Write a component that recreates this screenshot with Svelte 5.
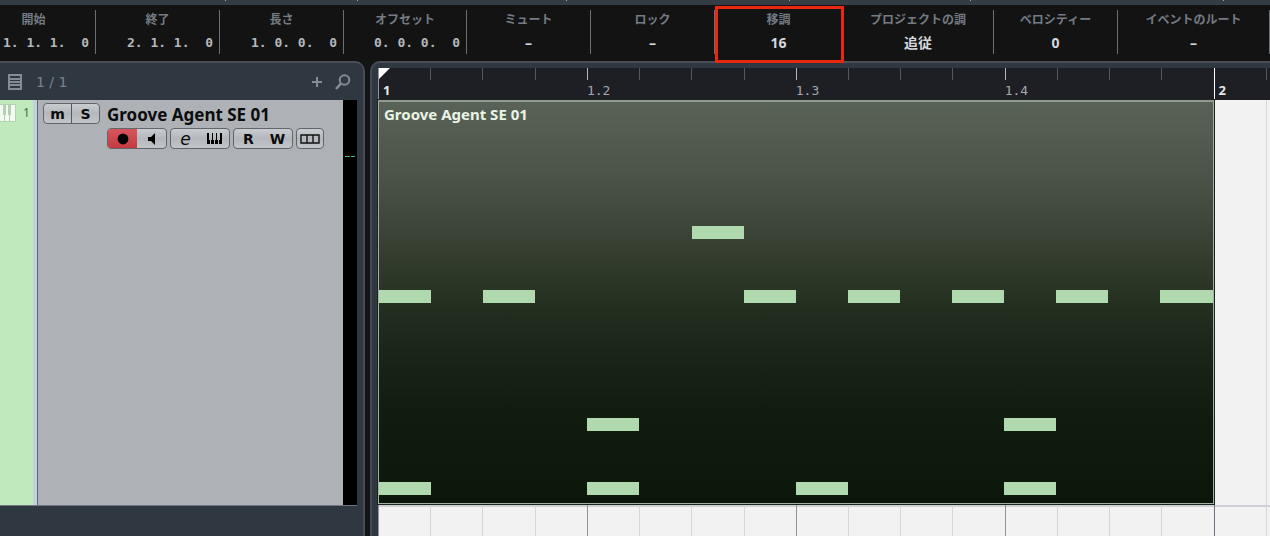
<script>
	const SIXTEENTHS_VISIBLE = 17.08;
	const CLIP_LENGTH = 16;

	let fields = [
		{ id: "start", label: "開始", value: "1. 1. 1.  0", time: true },
		{ id: "end", label: "終了", value: "2. 1. 1.  0", time: true },
		{ id: "length", label: "長さ", value: "1. 0. 0.  0", time: true },
		{ id: "offset", label: "オフセット", value: "0. 0. 0.  0", time: true },
		{ id: "mute", label: "ミュート", value: "–" },
		{ id: "lock", label: "ロック", value: "–" },
		{ id: "transpose", label: "移調", value: "16", marked: true },
		{ id: "rootKey", label: "プロジェクトの調", value: "追従" },
		{ id: "velocity", label: "ベロシティー", value: "0" },
		{ id: "eventRoot", label: "イベントのルート", value: "–" }
	];

	// lane 0 is the highest pitch, lane 20 the kick
	let notes = [
		{ lane: 0, steps: [6] },
		{ lane: 5, steps: [0, 2, 7, 9, 11, 13, 15] },
		{ lane: 15, steps: [4, 12] },
		{ lane: 20, steps: [0, 4, 8, 12] }
	];

	let ticks = Array.from({ length: 18 }, (_, i) => i);
	let barMarks = [17.7, 28.1, 44.6, 62.1, 76.4, 96.3];

	function tickX(step) {
		return (step / SIXTEENTHS_VISIBLE) * 100;
	}

	function tickLabel(step) {
		if (step % 4 !== 0) return "";
		const bar = Math.floor(step / 16) + 1;
		const beat = (step % 16) / 4 + 1;
		return beat === 1 ? String(bar) : `${bar}.${beat}`;
	}
</script>

<div class="project">
	<div class="toolbarEdge">
		{#each barMarks as x}
			<i style="left: {x}%"></i>
		{/each}
	</div>

	<div class="infoLine">
		{#each fields as field}
			<div class="field" class:time={field.time} class:marked={field.marked}>
				<label for={field.id}>{field.label}</label>
				<input id={field.id} type="text" bind:value={field.value} />
			</div>
		{/each}
	</div>

	<div class="workspace">
		<div class="trackPanel">
			<div class="trackHeader">
				<button class="plain" aria-label="Track list">
					<svg width="16" height="16" viewBox="0 0 16 16" fill="none" stroke="currentColor" stroke-width="2">
						<path d="M2 1h12v14H2zM3 5h10M3 8h10M3 11h10" />
					</svg>
				</button>
				<span class="count">1 / 1</span>
				<button class="plain" aria-label="Add track">
					<svg width="12" height="12" viewBox="0 0 12 12" stroke="currentColor" stroke-width="2">
						<path d="M6 1v10M1 6h10" />
					</svg>
				</button>
				<button class="plain" aria-label="Find track">
					<svg width="16" height="16" viewBox="0 0 16 16" fill="none" stroke="currentColor" stroke-width="2">
						<circle cx="9.5" cy="6" r="4.8" />
						<path d="M6 9.5L1 15" stroke-width="2.6" />
					</svg>
				</button>
			</div>

			<div class="track">
				<div class="trackColor">
					<svg width="16" height="18" viewBox="0 0 16 18">
						<path d="M0 0h16v18H0z" fill="#b3d2b1" />
						<path d="M0 1h3v10h1v6H0zM6 1h2v10h1v6H5v-6h1zM11 1h4v16h-5v-6h1z" fill="#f3fbf2" />
					</svg>
					<span>1</span>
				</div>

				<div class="trackBody">
					<div class="group muteSolo">
						<button>m</button>
						<button>S</button>
					</div>
					<div class="trackMain">
						<h2>Groove Agent SE 01</h2>
						<div class="controls">
							<div class="group">
								<button class="record" aria-label="Record enable">
									<svg width="12" height="12" viewBox="0 0 12 12"><circle cx="6" cy="6" r="5.4" /></svg>
								</button>
								<button aria-label="Monitor">
									<svg width="8" height="12" viewBox="0 0 8 12"><path d="M0 4h3l4-4v12L3 8H0z" /></svg>
								</button>
							</div>
							<div class="group">
								<button aria-label="Edit channel" class="edit">e</button>
								<button aria-label="Open instrument">
									<svg width="15" height="11" viewBox="0 0 15 11">
										<path d="M0 0h2v7h1v4H0zM5 0h1v7h1v4H4V7h1zM9 0h1v7h1v4H8V7h1zM13 0h2v11h-3V7h1z" />
									</svg>
								</button>
							</div>
							<div class="group">
								<button>R</button>
								<button>W</button>
							</div>
							<div class="group single">
								<button aria-label="Lanes">
									<svg width="20" height="10" viewBox="0 0 20 10" fill="none" stroke="#111" stroke-width="1.4">
										<path d="M1 1h18v8H1zM7 1v8M13 1v8" />
									</svg>
								</button>
							</div>
						</div>
					</div>
				</div>

				<div class="meter"><i></i><i></i></div>
			</div>
		</div>

		<div class="eventPanel">
			<div class="ruler">
				{#each ticks as step}
					<div class="tick" class:beat={step % 4 === 0} class:bar={step % 16 === 0} style="left: {tickX(step)}%">
						{#if tickLabel(step)}<span>{tickLabel(step)}</span>{/if}
					</div>
				{/each}
				<svg class="locator" width="11" height="11" viewBox="0 0 11 11"><path d="M0 0h11L0 11z" fill="#fff" /></svg>
			</div>

			<div class="canvas">
				{#each ticks as step}
					<i class="gridLine" class:beat={step % 4 === 0} class:bar={step === 16} style="left: {tickX(step)}%"></i>
				{/each}
				<div class="lane">
					<div class="clip" style="width: {tickX(CLIP_LENGTH)}%">
						<h3>Groove Agent SE 01</h3>
						{#each notes as row}
							{#each row.steps as step}
								<i
									class="note"
									style="left: {(step / CLIP_LENGTH) * 100}%; top: {31 + row.lane * 3.19}%; width: {100 / CLIP_LENGTH}%"
								></i>
							{/each}
						{/each}
					</div>
				</div>
			</div>
		</div>
	</div>
</div>

<style>
	:global(body) {
		margin: 0;
		background: #131415;
	}

	.project {
		display: flex;
		flex-direction: column;
		min-height: 100vh;
		overflow: hidden;
		background: #131415;
		font-family: "Noto Sans", "Noto Sans CJK JP", sans-serif;
	}

	button,
	input {
		margin: 0;
		padding: 0;
		border: none;
		background: none;
		font-family: inherit;
	}

	.toolbarEdge {
		position: relative;
		height: 5px;
		background: #343c44;
	}

	.toolbarEdge i {
		position: absolute;
		top: 0;
		width: 1px;
		height: 1px;
		background: #a4a9ae;
	}

	/* info line */

	.infoLine {
		display: grid;
		grid-template-columns: 96fr 124fr 124fr 123fr 124fr 124fr 128fr 151fr 124fr 152fr;
		height: 56px;
		padding: 5px 0 7px;
		box-sizing: border-box;
		background: #131313;
	}

	.field {
		position: relative;
		display: flex;
		flex-direction: column;
		align-items: center;
		min-width: 0;
		border-right: 1px solid #6b7075;
	}

	.field:first-child {
		margin-left: -28px;
	}

	.field label {
		color: #747b84;
		font-family: "Noto Sans CJK JP", sans-serif;
		font-size: 12px;
		font-weight: 700;
		line-height: 18px;
		white-space: nowrap;
	}

	.field input {
		width: 100%;
		height: 20px;
		margin-top: 4px;
		color: #d4d7dd;
		font-family: "Noto Sans", "Noto Sans CJK JP", sans-serif;
		font-size: 14px;
		font-weight: 700;
		text-align: center;
	}

	.field.time input {
		box-sizing: border-box;
		padding-right: 6px;
		color: #b4b8be;
		font-family: "DejaVu Sans Mono", monospace;
		font-size: 13px;
		text-align: right;
	}

	.marked::after {
		content: "";
		position: absolute;
		inset: -4px -2px -9px 0;
		border: 3px solid #e8290f;
		pointer-events: none;
		z-index: 2;
	}

	.workspace {
		flex: 1;
		display: flex;
		gap: 5px;
	}

	/* track list */

	.trackPanel {
		display: flex;
		flex-direction: column;
		flex: none;
		width: 365px;
		box-sizing: border-box;
		padding-right: 6px;
		border-top: 2px solid #4a4e5b;
		border-right: 2px solid #464b56;
		border-radius: 0 10px 0 0;
		background: #2f3741;
	}

	.trackHeader {
		display: flex;
		align-items: center;
		height: 37px;
		padding: 0 6px 0 7px;
		color: #838b95;
	}

	.plain {
		display: flex;
		color: inherit;
	}

	.count {
		flex: 1;
		margin-left: 13px;
		color: #7a828b;
		font-family: "DejaVu Sans", sans-serif;
		font-size: 14px;
	}

	.plain:last-child {
		margin-left: 12px;
	}

	.track {
		display: flex;
		height: 405px;
		border-bottom: 1px solid #71757f;
		background: #aeb2b6;
	}

	.trackColor {
		display: flex;
		align-items: flex-start;
		gap: 7px;
		width: 37px;
		padding-top: 4px;
		box-sizing: border-box;
		border-right: 4px solid #c2d2db;
		background: #c0eabd;
		color: #4c6a4c;
		font-size: 12px;
		line-height: 18px;
	}

	.trackBody {
		flex: 1;
		display: flex;
		align-items: flex-start;
		gap: 7px;
		padding: 3px 0 0 5px;
		border-left: 1px solid #626579;
	}

	.group {
		display: flex;
		width: 60px;
		height: 21px;
		box-sizing: border-box;
		border: 1px solid #62656a;
		border-radius: 4px;
		overflow: hidden;
		background: linear-gradient(#c9ccd0, #b4b8bd 50%, #c2c5ca);
	}

	.group button {
		flex: 1;
		display: flex;
		align-items: center;
		justify-content: center;
		color: #0b0b0b;
		font-family: "DejaVu Sans", sans-serif;
		font-size: 14px;
		font-weight: 700;
		line-height: 18px;
	}

	.muteSolo {
		width: 57px;
	}

	.muteSolo button:first-child {
		border-right: 1px solid #55585c;
	}

	.group .record {
		background: linear-gradient(#d4575b, #c43a42);
	}

	.group .edit {
		font-size: 17px;
		font-style: italic;
		font-weight: 400;
	}

	.single {
		width: 28px;
	}

	.trackMain h2 {
		margin: 0;
		color: #0b0c0e;
		font-size: 17px;
		font-weight: 700;
		line-height: 23px;
	}

	.controls {
		display: flex;
		gap: 3px;
		margin-top: 2px;
	}

	.meter {
		display: flex;
		gap: 1px;
		width: 14px;
		padding: 56px 2px 0;
		box-sizing: border-box;
		background: #000;
	}

	.meter i {
		flex: 1;
		height: 1px;
		background: #37b78c;
	}

	/* event display */

	.eventPanel {
		flex: 1;
		display: flex;
		flex-direction: column;
		min-width: 0;
		padding: 5px 0 0 6px;
		border-top: 2px solid #4a4e5b;
		border-left: 2px solid #464b56;
		border-radius: 10px 0 0 0;
		background: #2f3741;
	}

	.ruler {
		position: relative;
		height: 32px;
		box-shadow: inset 1px 0 0 #8f9297;
		background: #1e1f24;
	}

	.tick {
		position: absolute;
		top: 0;
		width: 1px;
		height: 12px;
		background: #55575b;
	}

	.tick.beat {
		background: #b4b6b9;
	}

	.tick.bar {
		height: 31px;
		background: #fff;
	}

	.tick:first-child {
		background: none;
	}

	.tick span {
		position: absolute;
		left: 0;
		top: 14px;
		color: #a4a7ab;
		font-family: "DejaVu Sans Mono", monospace;
		font-size: 13px;
		line-height: 17px;
	}

	.tick.bar span {
		left: 5px;
		color: #e6e8ea;
		font-family: "Noto Sans", sans-serif;
		font-weight: 700;
	}

	.locator {
		position: absolute;
		left: 1px;
		top: 0;
	}

	.canvas {
		position: relative;
		flex: 1;
		background: #f2f2f3;
	}

	.gridLine {
		position: absolute;
		top: 0;
		bottom: 0;
		width: 1px;
		background: #d6d6d9;
	}

	.gridLine.beat {
		background: #929297;
	}

	.gridLine.bar {
		background: #68757f;
	}

	.lane {
		height: 405px;
		border-bottom: 2px solid #d0d1d6;
	}

	.clip {
		position: relative;
		height: 404px;
		box-sizing: border-box;
		border: 1px solid #a5ada4;
		border-top: 2px solid #929a92;
		outline: 1px solid #18251a;
		background: linear-gradient(#596257 0%, #4c5449 18%, #394234 34%, #202c1d 54%, #101d0f 76%, #0a1709 100%);
	}

	.clip h3 {
		margin: 0;
		padding: 1px 5px;
		color: #e9f4e6;
		font-size: 15px;
		font-weight: 700;
		line-height: 22px;
	}

	.note {
		position: absolute;
		height: 13px;
		background: #b0d9ae;
	}
</style>
